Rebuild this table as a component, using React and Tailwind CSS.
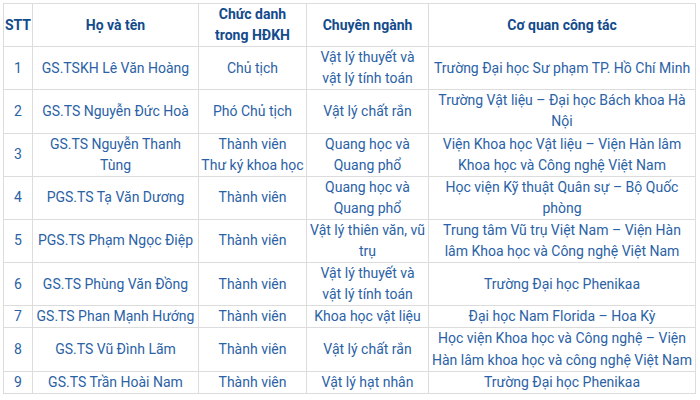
const rows = [
  ['1', 'GS.TSKH Lê Văn Hoàng', 'Chủ tịch', 'Vật lý thuyết và vật lý tính toán', 'Trường Đại học Sư phạm TP. Hồ Chí Minh'],
  ['2', 'GS.TS Nguyễn Đức Hoà', 'Phó Chủ tịch', 'Vật lý chất rắn', 'Trường Vật liệu – Đại học Bách khoa Hà Nội'],
  ['3', 'GS.TS Nguyễn Thanh Tùng', 'Thành viên\nThư ký khoa học', 'Quang học và Quang phổ', 'Viện Khoa học Vật liệu – Viện Hàn lâm Khoa học và Công nghệ Việt Nam'],
  ['4', 'PGS.TS Tạ Văn Dương', 'Thành viên', 'Quang học và Quang phổ', 'Học viện Kỹ thuật Quân sự – Bộ Quốc phòng'],
  ['5', 'PGS.TS Phạm Ngọc Điệp', 'Thành viên', 'Vật lý thiên văn, vũ trụ', 'Trung tâm Vũ trụ Việt Nam – Viện Hàn lâm Khoa học và Công nghệ Việt Nam'],
  ['6', 'GS.TS Phùng Văn Đồng', 'Thành viên', 'Vật lý thuyết và vật lý tính toán', 'Trường Đại học Phenikaa'],
  ['7', 'GS.TS Phan Mạnh Hướng', 'Thành viên', 'Khoa học vật liệu', 'Đại học Nam Florida – Hoa Kỳ'],
  ['8', 'GS.TS Vũ Đình Lãm', 'Thành viên', 'Vật lý chất rắn', 'Học viện Khoa học và Công nghệ – Viện Hàn lâm khoa học và công nghệ Việt Nam'],
  ['9', 'GS.TS Trần Hoài Nam', 'Thành viên', 'Vật lý hạt nhân', 'Trường Đại học Phenikaa'],
];

// padding per column, so the lines break where the original breaks them
const pad = ['px-0', 'px-[3px]', 'px-0', 'px-[3px]', 'px-[3px]'];

const App = () => {
  return (
    <div className="w-[700px] h-[400px] bg-white p-[3px] font-['Roboto',sans-serif] text-[14px] leading-[21.1px]">
      <table className="table-fixed border-collapse w-[692px]">
        <colgroup>
          <col className="w-[29px]" />
          <col className="w-[166px]" />
          <col className="w-[108px]" />
          <col className="w-[122px]" />
          <col className="w-[267px]" />
        </colgroup>
        <thead>
          <tr className="text-[#134b8c] font-bold">
            <th className="border border-[#dcdcdc] px-0 text-center">STT</th>
            <th className="border border-[#dcdcdc] px-0 text-center">Họ và tên</th>
            <th className="border border-[#dcdcdc] px-0 text-center">Chức danh<br />trong HĐKH</th>
            <th className="border border-[#dcdcdc] px-0 text-center">Chuyên ngành</th>
            <th className="border border-[#dcdcdc] px-0 text-center">Cơ quan công tác</th>
          </tr>
        </thead>
        <tbody className="text-[#2b62a6]">
          {rows.map((r) => (
            <tr key={r[0]}>
              {r.map((cell, i) => (
                <td
                  key={i}
                  className={`border border-[#dcdcdc] text-center align-middle whitespace-pre-line ${pad[i]}`}
                >
                  {cell}
                </td>
              ))}
            </tr>
          ))}
        </tbody>
      </table>
    </div>
  );
};

export default App;
